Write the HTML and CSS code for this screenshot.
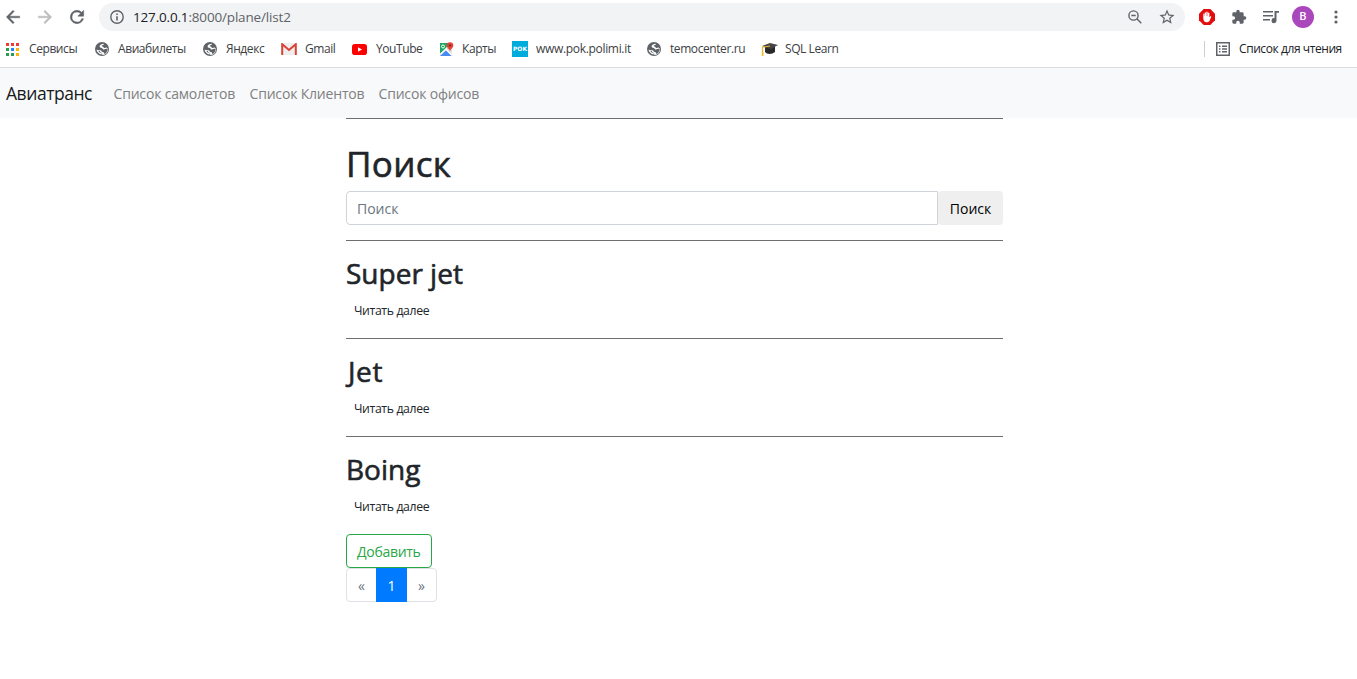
FILE: index.html
```html
<!DOCTYPE html>
<html lang="ru">
<head>
<meta charset="utf-8">
<title>Авиатранс</title>
<link rel="stylesheet" href="styles.css">
</head>
<body>
<svg class="defs" width="0" height="0">
  <symbol id="globe" viewBox="0 0 14 14">
    <circle cx="7" cy="7" r="7" fill="#5f6368"/>
    <path d="M8.800 1.700C7 1.600 4.800 2.700 4.600 4.300c-.1 1.300 1 1.600 2.200 1.700 1 .1.500 1.300 1.600 1.500 1.300.2 2.400-.8 4.100-.6 0 2.400-1.300 4.400-3.300 5.200.3-1.300-.4-1.900-1.700-2-.9-.1-.6-1.200-1.400-1.600-1-.5-2.300-.3-4.600-.7.5 2.300 2.400 4.400 5 4.800l.4-1.300c-1.700-.3-3-1.300-3.600-2.600h1.500c.2 1.400.9 1.900 2.200 2.200l.3 2.100 2.600-.5c2.300-1.200 3.300-3.500 2.900-6.100L11.500 5.500c-.8 0-1.500.7-2.300.6-.9-.2-.4-1.400-1.600-1.600-.9-.2-1.100-.5-.7-1 .5-.6 1.500-.5 1.900-1z" fill="#fff"/>
  </symbol>
</svg>
<header class="browser">
  <div class="toolbar">
    <svg class="arrow" viewBox="0 0 24 24"><path d="M20 11H7.830l5.590-5.590L12 4l-8 8 8 8 1.410-1.410L7.830 13H20z" fill="#5f6368" stroke="#5f6368" stroke-width=".5"/></svg>
    <svg class="arrow forward" viewBox="0 0 24 24"><path d="M4 11h12.170l-5.590-5.590L12 4l8 8-8 8-1.410-1.410L16.170 13H4z" fill="#babcbe" stroke="#babcbe" stroke-width=".5"/></svg>
    <svg class="arrow reload" viewBox="0 0 24 24"><path d="M17.650 6.350A7.960 7.960 0 0 0 12 4a8 8 0 1 0 7.730 10h-2.080A6 6 0 1 1 12 6c1.660 0 3.140.69 4.220 1.780L13 11h7V4z" fill="#5f6368" stroke="#5f6368" stroke-width=".6"/></svg>
    <div class="address">
      <svg class="info" viewBox="0 0 14 14"><circle cx="7" cy="7" r="6.200" fill="none" stroke="#5f6368" stroke-width="1.400"/><path d="M6.200 6.200h1.600v4.300H6.200zM6.200 3.500h1.600v1.500H6.200z" fill="#5f6368"/></svg>
      <span class="url"><b>127.0.0.1</b>:8000/plane/list2</span>
      <svg class="magnifier" viewBox="0 0 14 14"><g fill="none" stroke="#5f6368" stroke-width="1.400"><circle cx="5.500" cy="5.500" r="4.600"/><path d="M8.800 8.800l4.500 4.500M3.300 5.500h4.400"/></g></svg>
      <svg class="star" viewBox="0 0 24 24"><path d="M22 9.240l-7.190-.62L12 2 9.190 8.630 2 9.240l5.460 4.730L5.820 21 12 17.270 18.180 21l-1.630-7.030zM12 15.400l-3.760 2.270 1-4.280-3.320-2.880 4.380-.38L12 6.100l1.710 4.040 4.380.38-3.320 2.880 1 4.280z" fill="#5f6368"/></svg>
    </div>
    <svg class="blocker" viewBox="0 0 16 16"><path d="M4.700 0h6.600L16 4.700v6.600L11.300 16H4.700L0 11.300V4.700z" fill="#e40d0d"/><path d="M4.300 8.500V5.200c0-.9 1.100-.9 1.100 0V7h.3V3.800c0-.9 1.300-.9 1.300 0V7h.3V3.200c0-.9 1.400-.9 1.400 0V7h.3V4.200c0-.9 1.400-.9 1.400 0v4.300l.7-1c.5-.7 1.400-.2 1.100.5l-1.500 3.500c-.5 1.100-1.300 1.700-2.600 1.700-2.500 0-3.800-1.200-3.800-4.700z" fill="#fff"/></svg>
    <svg class="puzzle" viewBox="0 0 24 24"><path d="M20.500 11H19V7a2 2 0 0 0-2-2h-4V3.500a2.500 2.500 0 0 0-5 0V5H4a2 2 0 0 0-2 2v3.800h1.500a2.700 2.700 0 0 1 0 5.400H2V20c0 1.100.9 2 2 2h3.800v-1.500a2.700 2.700 0 0 1 5.400 0V22H17a2 2 0 0 0 2-2v-4h1.500a2.500 2.500 0 0 0 0-5z" fill="#5f6368"/></svg>
    <svg class="queue" viewBox="0 0 17 14"><path d="M0 1h10v1.600H0zM0 5h10v1.600H0zM0 9h7v1.600H0zM11.500 1h4.500v1.700h-2.500v7.800A2.500 2.500 0 1 1 11.500 8.200z" fill="#5f6368"/></svg>
    <span class="avatar">B</span>
    <svg class="kebab" viewBox="0 0 4 14"><g fill="#5f6368"><circle cx="2" cy="2" r="1.600"/><circle cx="2" cy="7" r="1.600"/><circle cx="2" cy="12" r="1.600"/></g></svg>
  </div>
  <nav class="bookmarks">
    <a class="bm services"><svg viewBox="0 0 13 13"><path d="M0 0h3v3H0zM5 0h3v3H5zM10 0h3v3h-3z" fill="#f03a35"/><path d="M0 5h3v3H0zM0 10h3v3H0zM5 10h3v3H5z" fill="#2a9d55"/><path d="M5 5h3v3H5z" fill="#2385f5"/><path d="M10 5h3v3h-3zM10 10h3v3h-3z" fill="#fbb30b"/></svg><span>Сервисы</span></a>
    <a class="bm tickets"><svg><use href="#globe"/></svg><span>Авиабилеты</span></a>
    <a class="bm yandex"><svg><use href="#globe"/></svg><span>Яндекс</span></a>
    <a class="bm gmail"><svg viewBox="0 0 16 12"><path d="M1 0h14v12H1z" fill="#eee"/><path d="M1.200 12V1.200L8 7l6.800-5.800V12" fill="none" stroke="#d94235" stroke-width="2"/></svg><span>Gmail</span></a>
    <a class="bm youtube"><svg viewBox="0 0 15 11"><rect width="15" height="11" rx="2.800" fill="#f00"/><path d="M6 3.200v4.600l4-2.300z" fill="#fff"/></svg><span>YouTube</span></a>
    <a class="bm maps"><svg viewBox="0 0 15 15"><path d="M1 1h12v13H1z" fill="#e4e4e4"/><path d="M1 1h9v4L1 13z" fill="#1fa463"/><path d="M1 14l6.500-6 6 6z" fill="#4889f4"/><path d="M1 12.500L12 2M7 7.500l6 6" stroke="#fff" stroke-width="1.300"/><path d="M11 10c0-3-3.300-3.700-3.300-6.500a3.300 3.300 0 0 1 6.600 0C14.300 6.300 11 7 11 10z" fill="#e84335"/><circle cx="11" cy="3.500" r="1.200" fill="#842c26"/><circle cx="4" cy="4.500" r="1.500" fill="none" stroke="#fff"/></svg><span>Карты</span></a>
    <a class="bm pok"><i>POK</i><span>www.pok.polimi.it</span></a>
    <a class="bm temo"><svg><use href="#globe"/></svg><span>temocenter.ru</span></a>
    <a class="bm sql"><svg viewBox="0 0 17 15"><path d="M4 5v5c2 2.500 7 2.500 10 0V5z" fill="#292929"/><path d="M1 4l8-3 8 2-7 4z" fill="#454545"/><path d="M9 4L1.500 5.200v8" fill="none" stroke="#e9b52b" stroke-width="1.200"/><path d="M.8 10h1.600v4H.8z" fill="#f2bd29"/></svg><span>SQL Learn</span></a>
    <a class="bm reading"><svg viewBox="0 0 14 14"><path d="M.75.75h12.500v12.500H.75z" fill="none" stroke="#5f6368" stroke-width="1.500"/><path d="M3 3.500h1.500V5H3zM6 3.500h5V5H6zM3 6.300h1.500v1.500H3zM6 6.300h5v1.500H6zM3 9.100h1.500v1.500H3zM6 9.100h5v1.500H6z" fill="#5f6368"/></svg><span>Список для чтения</span></a>
  </nav>
</header>
<nav class="navbar">
  <a class="brand">Авиатранс</a>
  <a class="link planes">Список самолетов</a>
  <a class="link clients">Список Клиентов</a>
  <a class="link">Список офисов</a>
</nav>
<main class="content">
  <section class="search">
    <h1>Поиск</h1>
    <form class="search-row">
      <input type="text" placeholder="Поиск">
      <button type="button">Поиск</button>
    </form>
  </section>
  <article class="plane"><h2 class="super">Super jet</h2><a>Читать далее</a></article>
  <article class="plane"><h2 class="jet">Jet</h2><a>Читать далее</a></article>
  <article class="plane"><h2 class="boing">Boing</h2><a>Читать далее</a></article>
  <a class="add">Добавить</a>
  <div class="pages"><a>«</a><a class="current">1</a><a>»</a></div>
</main>
</body>
</html>
```
FILE: styles.css
```css
* { box-sizing: border-box; }
body { margin: 0; background: #fff; color: #212529; font-family: "Open Sans", "Noto Sans", sans-serif; font-size: 14px; overflow: hidden; }
.defs { position: absolute; }
svg { display: block; flex: none; }
a, span { white-space: nowrap; }

.browser { height: 68px; border-bottom: 1px solid #dadce0; }
.toolbar { display: flex; align-items: center; height: 34px; padding-left: 3px; }
.arrow { width: 20px; height: 20px; }
.forward { margin-left: 12px; }
.reload { margin-left: 12px; }
.address { display: flex; align-items: center; width: 1086px; height: 28px; margin-left: 12px; padding: 0 9px 0 11px; border-radius: 14px; background: #f1f3f4; }
.info { width: 14px; height: 14px; }
.url { flex: 1; margin-left: 9px; color: #5f6368; font-size: 13.500px; letter-spacing: -.17px; }
.url b { color: #202124; font-weight: 400; }
.magnifier { width: 14px; height: 14px; margin-right: 16px; }
.star { width: 18px; height: 18px; }
.blocker { width: 16px; height: 16px; margin-left: 14px; }
.puzzle { width: 16px; height: 16px; margin-left: 16px; }
.queue { width: 17px; height: 14px; margin-left: 16px; }
.avatar { width: 22px; height: 22px; margin-left: 12px; border-radius: 50%; background: #ab47bc; color: #fff; font: 500 11px/22px Roboto, sans-serif; text-align: center; }
.kebab { width: 4px; height: 14px; margin-left: 19.500px; }

.bookmarks { display: flex; height: 33px; padding-left: 6px; color: #3c4043; font-size: 12px; letter-spacing: -.42px; }
.bm { display: flex; align-items: center; height: 30px; }
.bm span { padding-bottom: 1px; }
.bm svg { width: 14px; height: 14px; margin-right: 9px; }
.services { width: 89px; }
.services svg { width: 13px; height: 13px; margin-right: 10px; }
.tickets { width: 108px; }
.yandex { width: 78px; }
.bm.gmail svg { width: 16px; height: 12px; margin-right: 8px; }
.gmail { width: 71px; }
.bm.youtube svg { width: 15px; height: 11px; }
.youtube { width: 87px; }
.bm.maps svg { width: 15px; height: 15px; margin-right: 8px; }
.maps { width: 73px; }
.pok { width: 135px; letter-spacing: -.32px; }
.pok i { width: 16px; height: 16px; margin-right: 8px; background: #00acdc; color: #fff; font: bold 6px/16px "DejaVu Sans", sans-serif; letter-spacing: 0; text-align: center; }
.temo { width: 114px; }
.bm.sql svg { width: 17px; height: 15px; margin-right: 7px; }
.reading { position: relative; margin-left: auto; width: 141px; color: #202124; }
.reading::before { content: ""; position: absolute; left: -12px; top: 7px; width: 1px; height: 16px; background: #ccced1; }

.navbar { display: flex; align-items: center; height: 50px; padding-left: 6px; background: #f8f9fa; }
.brand { width: 107.500px; color: #181a1b; font-size: 17.500px; letter-spacing: -.45px; }
.link { color: #7f8081; font-size: 14px; letter-spacing: -.18px; }
.planes { width: 136px; }
.clients { width: 129px; }

.content { display: flex; flex-direction: column; width: 657px; margin-left: 346px; }
.search { height: 122px; border-top: 1px solid #6d6e6f; padding-top: 24px; }
h1, h2 { margin: 0; font-weight: 500; -webkit-text-stroke: .6px #212529; }
h1 { height: 48px; font-size: 35px; line-height: 42px; letter-spacing: .3px; }
.search-row { display: flex; height: 34px; }
input { width: 592px; height: 34px; padding: 1px 11px 0 10px; border: 1px solid #ced4da; border-radius: 4px 0 0 4px; font: 14px "Open Sans", sans-serif; }
input::placeholder { color: #6c757d; }
button { width: 65px; height: 34px; padding: 1px 0 0; border: 0; border-radius: 4px; background: #efefef; color: #000; font: 14px "Open Sans", sans-serif; }
.plane { height: 98px; padding: 15px 0 0; border-top: 1px solid #6d6e6f; }
h2 { height: 44px; font-size: 28px; line-height: 34px; }
.jet { letter-spacing: .6px; padding-left: 2px; }
.plane a { display: block; padding-left: 8px; font-size: 12.250px; line-height: 22px; letter-spacing: -.37px; }
.add { width: 86px; height: 34px; padding: 2px 0 0 10px; border: 1px solid #28a745; border-radius: 4px; color: #28a745; line-height: 30px; letter-spacing: -.3px; }
.pages { display: flex; width: 91px; height: 34px; border: 1px solid #dee2e6; border-radius: 4px; color: #6c757d; line-height: 34px; text-align: center; }
.pages a { width: 29px; }
.pages .current { width: 31px; height: 34px; margin-top: -1px; line-height: 36px; background: #007bff; color: #fff; }
```
